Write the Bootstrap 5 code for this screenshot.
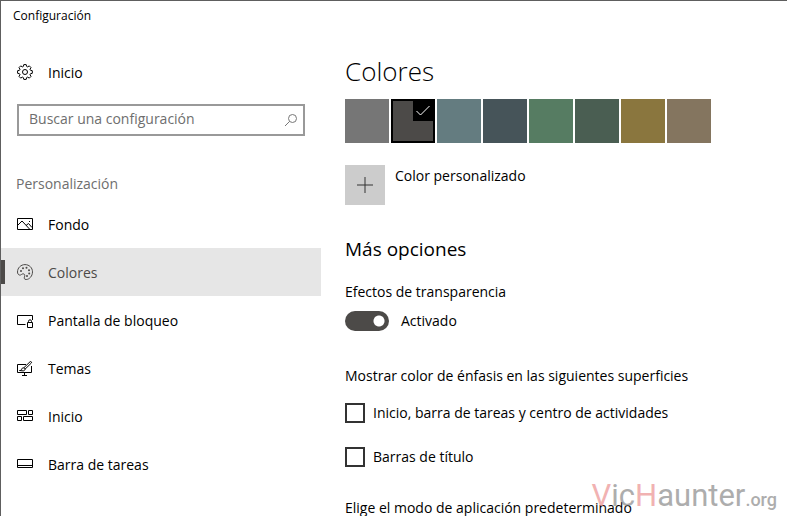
<!DOCTYPE html>
<html lang="es">
<head>
<meta charset="utf-8">
<meta name="viewport" content="width=device-width, initial-scale=1">
<title>Configuración</title>
<link href="https://cdn.jsdelivr.net/npm/bootstrap@5.3.0/dist/css/bootstrap.min.css" rel="stylesheet">
<style>
  body { font-family: "Open Sans", "Noto Sans", sans-serif; font-size: 14px; line-height: 20px; color: #000; background: #fff; }
  .window { border-top: 1px solid #5e5e5e; border-left: 1px solid #5e5e5e; }
  .titlebar { height: 47px; padding: 5px 12px; font-size: 12px; }
  .sidebar { width: 320px; }
  .side-link { height: 48px; padding: 0 16px; gap: 15px; color: #000; text-decoration: none; border-radius: 0; }
  .side-link:hover { background: #f2f2f2; color: #000; }
  .side-link.active { background: #e6e6e6; color: #4c4a48; }
  .side-link.active::before { content: ""; width: 4px; height: 24px; margin: 0 -3px 0 -16px; background: #4c4a48; }
  .side-link span { padding-top: 2px; }
  .side-link svg { width: 16px; height: 16px; flex: none; fill: none; stroke: currentColor; }
  .search { height: 32px; margin: 8px 16px 0; border: 2px solid #999; }
  .search input { font-size: 14px; line-height: 20px; color: #000; padding: 0 10px 2px; border: 0; background: transparent; box-shadow: none; }
  .search input::placeholder { color: #6e6e6e; }
  .search button { width: 26px; padding: 0; border: 0; background: transparent; color: #777; }
  .group-name { margin: 38px 15px 6px; color: #6e6e6e; font-size: 14px; line-height: 20px; font-weight: 400; }
  .content { padding: 0 24px; }
  .page-name { font-size: 26px; line-height: 34px; font-weight: 300; margin: 6px 0 11px; }
  .swatches { gap: 2px; }
  .swatch { width: 44px; height: 44px; padding: 0; border: 0; }
  .swatch.chosen { border: 2px solid #000; display: flex; justify-content: end; align-items: start; }
  .swatch.chosen svg { width: 20px; height: 20px; background: #000; }
  .c-gray { background: #767676; } .c-dark { background: #4c4a48; } .c-teal { background: #647c80; }
  .c-slate { background: #465459; } .c-green { background: #567c62; } .c-forest { background: #4a5e52; }
  .c-gold { background: #8a763e; } .c-taupe { background: #84755f; }
  .custom { margin-top: 22px; gap: 10px; }
  .custom label { padding-top: 1px; }
  .add { width: 40px; height: 40px; padding: 0; border: 0; background: #ccc; color: #333; }
  .section-name { font-size: 19px; line-height: 28px; font-weight: 400; margin: 30px 0 19px; }
  .toggle-row { margin-top: 9px; gap: 12px; padding: 0; min-height: 20px; }
  .toggle-row .form-check-input { width: 44px; height: 20px; margin: 0; float: none; border: 0; background-color: #4c4a48;
    background-image: radial-gradient(circle at 34px 10px, #fff 4px, #fff 5px, transparent 6px); }
  .toggle-row .form-check-input:not(:checked) { background-color: #999; background-image: radial-gradient(circle at 10px 10px, #fff 5px, transparent 6px); }
  .accent-name { margin: 35px 0 17px; }
  .tick-row { gap: 8px; padding: 0; margin: 0 0 24px; min-height: 20px; }
  .tick-row .form-check-input { width: 20px; height: 20px; margin: 0; float: none; border: 2px solid #333; border-radius: 0; background-color: #fff; }
  .tick-row .form-check-input:checked { background-color: #4c4a48; }
  .mode-name { margin: 31px 0 0; }
  .watermark { right: 10px; bottom: -2px; font-family: Roboto, sans-serif; font-size: 31px; line-height: 36px; color: #777; opacity: .6; pointer-events: none; }
  .watermark b { font-weight: 400; color: #e98080; }
  .watermark span { font-size: 18px; font-weight: 500; }
</style>
</head>
<body>
<div class="window vh-100 d-flex flex-column overflow-hidden position-relative">
  <header class="titlebar flex-shrink-0">Configuración</header>
  <div class="d-flex flex-grow-1">
    <nav class="sidebar flex-shrink-0 d-flex flex-column" aria-label="Configuración">
      <a class="side-link d-flex align-items-center" href="#home">
        <svg viewBox="0 0 16 16" aria-hidden="true"><circle cx="8" cy="8" r="2.5"/><path d="M6.8.6h2.4l.5 1.9.9.4 1.7-1 1.7 1.7-1 1.7.4.9 1.9.5v2.6l-1.9.5-.4.9 1 1.7-1.7 1.7-1.7-1-.9.4-.5 1.9H6.8l-.5-1.9-.9-.4-1.7 1L2 12.4l1-1.7-.4-.9-2-.5V6.700l2-.5.4-.9-1-1.700 1.700-1.700 1.700 1 .9-.4z"/></svg>
        <span>Inicio</span>
      </a>
      <form class="search d-flex" role="search">
        <input class="form-control rounded-0" type="text" placeholder="Buscar una configuración" aria-label="Buscar una configuración">
        <button class="btn rounded-0 d-flex align-items-center justify-content-center" type="button" aria-label="Buscar">
          <svg width="14" height="14" viewBox="0 0 14 14" fill="none" stroke="currentColor"><circle cx="8.500" cy="5.500" r="4"/><path d="M5.600 8.400 1 13"/></svg>
        </button>
      </form>
      <h2 class="group-name">Personalización</h2>
      <a class="side-link d-flex align-items-center" href="#background">
        <svg viewBox="0 0 16 16" aria-hidden="true"><path d="M.5 2.500h15v11H.5zM1 9l4-4 7.500 8M9 9.500l2.500-2 3.500 4"/><path d="M12 5.500h1"/></svg>
        <span>Fondo</span>
      </a>
      <a class="side-link active d-flex align-items-center" href="#colors" aria-current="page">
        <svg viewBox="0 0 16 16" aria-hidden="true"><path d="M8 .6c4.300 0 7.500 3.200 7.500 7.300 0 4.200-3.200 7.600-6.300 7.600-2 0-2.300-1.300-1.700-2.600.7-1.600.1-3-1.300-3.100-1.500 0-2 1.500-3.500 1.300C1.300 10.900.5 9.600.5 8 .5 3.900 3.800.6 8 .6z"/><g fill="currentColor" stroke="none"><circle cx="4" cy="7" r="1"/><circle cx="6" cy="4.200" r="1"/><circle cx="9.500" cy="3.800" r="1"/><circle cx="12" cy="6.300" r="1"/><circle cx="12.200" cy="9.500" r="1"/><circle cx="10" cy="12" r="1"/></g></svg>
        <span>Colores</span>
      </a>
      <a class="side-link d-flex align-items-center" href="#lock">
        <svg viewBox="0 0 16 16" aria-hidden="true"><path d="M8.500 12.500h-8v-9h15v4.500M10.500 10.500h5v5h-5zM11.500 10.500V9.300a1.500 1.500 0 0 1 3 0v1.200"/></svg>
        <span>Pantalla de bloqueo</span>
      </a>
      <a class="side-link d-flex align-items-center" href="#themes">
        <svg viewBox="0 0 16 16" aria-hidden="true"><path d="M9 4.500H.5v8h14V6M7.500 12.500v3M5 15.500h5"/><path d="M2.500 10.500c1.600 0 2-.6 2.300-1.600.4-1.300 2.200-1.500 2.900-.5.8 1.100 0 2.400-1.500 2.500zM6.800 7.800l6.200-6c.9-.7 2 .3 1.400 1.200L8 9.200" /></svg>
        <span>Temas</span>
      </a>
      <a class="side-link d-flex align-items-center" href="#start">
        <svg viewBox="0 0 16 16" aria-hidden="true"><path d="M.5 2.500h9v4h-9zM11.500 2.500h4v4h-4zM.5 8.500h4v4h-4zM6.500 8.500h9v4h-9z"/></svg>
        <span>Inicio</span>
      </a>
      <a class="side-link d-flex align-items-center" href="#taskbar">
        <svg viewBox="0 0 16 16" aria-hidden="true"><path d="M.5 3.500h15v8H.5zM.5 9.500h15"/></svg>
        <span>Barra de tareas</span>
      </a>
    </nav>
    <main class="content flex-grow-1">
      <h1 class="page-name">Colores</h1>
      <div class="swatches d-flex flex-wrap">
        <button class="swatch c-gray" type="button" aria-label="Gris"></button>
        <button class="swatch c-dark chosen" type="button" aria-label="Gris oscuro" aria-pressed="true"><svg viewBox="0 0 20 20" fill="none" stroke="#fff" aria-hidden="true"><path d="m3.500 10 4 4 9-9"/></svg></button>
        <button class="swatch c-teal" type="button" aria-label="Azul grisáceo"></button>
        <button class="swatch c-slate" type="button" aria-label="Pizarra"></button>
        <button class="swatch c-green" type="button" aria-label="Verde"></button>
        <button class="swatch c-forest" type="button" aria-label="Verde oscuro"></button>
        <button class="swatch c-gold" type="button" aria-label="Dorado"></button>
        <button class="swatch c-taupe" type="button" aria-label="Topo"></button>
      </div>
      <div class="custom d-flex align-items-start">
        <button class="add d-flex align-items-center justify-content-center" id="add" type="button" aria-labelledby="add-label"><svg width="16" height="16" viewBox="0 0 16 16" stroke="currentColor" aria-hidden="true"><path d="M8 0v16M0 8h16"/></svg></button>
        <label id="add-label" for="add">Color personalizado</label>
      </div>
      <h2 class="section-name">Más opciones</h2>
      <div>Efectos de transparencia</div>
      <div class="toggle-row form-check form-switch d-flex align-items-center mb-0">
        <input class="form-check-input" type="checkbox" role="switch" id="transparency" checked>
        <label for="transparency">Activado</label>
      </div>
      <div class="accent-name">Mostrar color de énfasis en las siguientes superficies</div>
      <div class="tick-row form-check d-flex align-items-center">
        <input class="form-check-input" type="checkbox" id="surfaces"><label for="surfaces">Inicio, barra de tareas y centro de actividades</label>
      </div>
      <div class="tick-row form-check d-flex align-items-center">
        <input class="form-check-input" type="checkbox" id="titles"><label for="titles">Barras de título</label>
      </div>
      <div class="mode-name">Elige el modo de aplicación predeterminado</div>
    </main>
  </div>
  <div class="watermark position-absolute"><b>V</b>ic<b>H</b>aunter<span>.org</span></div>
</div>
<script src="https://cdn.jsdelivr.net/npm/bootstrap@5.3.0/dist/js/bootstrap.bundle.min.js"></script>
</body>
</html>
